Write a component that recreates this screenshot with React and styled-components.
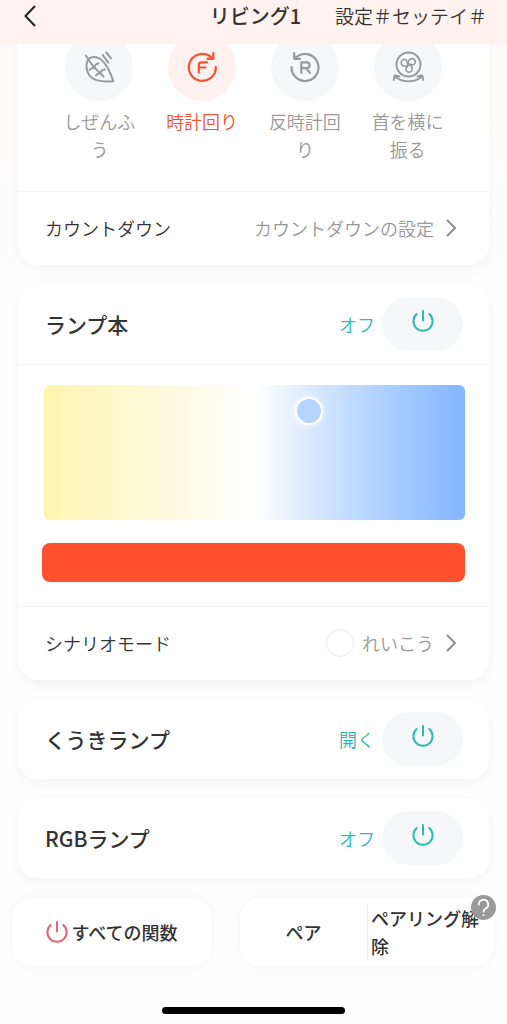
import React, { useState } from "react";
import styled, { createGlobalStyle } from "styled-components";

const GlobalStyle = createGlobalStyle`
  * {
    box-sizing: border-box;
  }
  body {
    margin: 0;
    background: linear-gradient(#fffafa, #fdfdfd 280px);
    font-family: "Noto Sans CJK JP", "Noto Sans", sans-serif;
    font-size: 18px;
    font-weight: 350;
    color: #333333;
  }
  h1, h2 {
    margin: 0;
    font-weight: 500;
  }
`;

const PlainButton = styled.button`
  font: inherit;
  color: inherit;
  background: none;
  border: none;
  padding: 0;
  cursor: pointer;
`;

const Header = styled.header`
  position: sticky;
  top: 0;
  z-index: 2;
  height: 44px;
  padding: 0 20px 12px 24px;
  display: grid;
  grid-template-columns: 1fr auto 1fr;
  align-items: center;
  background: #fff2ef;
`;

const BackButton = styled(PlainButton)`
  justify-self: start;
  display: flex;
`;

const Title = styled.h1`
  font-size: 20px;
  line-height: 32px;
`;

const SettingsButton = styled(PlainButton)`
  justify-self: end;
  font-size: 19px;
  line-height: 32px;
  white-space: nowrap;
`;

const Main = styled.main`
  display: flex;
  flex-direction: column;
  gap: 20px;
  margin-top: -24px;
  padding: 0 18px;
`;

const Card = styled.section`
  background: #ffffff;
  border-radius: 20px;
  box-shadow: 0 4px 10px rgba(0, 0, 0, 0.04);
`;

const Modes = styled.div`
  display: grid;
  grid-template-columns: repeat(4, 1fr);
  padding: 13px 30px 28px;
`;

const ModeButton = styled(PlainButton)`
  display: flex;
  flex-direction: column;
  align-items: center;
  gap: 6px;
  line-height: 28px;
  color: ${(props) => (props.$active ? "#f4532f" : "#999999")};
`;

const ModeIcon = styled.span`
  width: 68px;
  height: 68px;
  border-radius: 50%;
  display: flex;
  align-items: center;
  justify-content: center;
  background: ${(props) => (props.$active ? "#fff1ef" : "#f5f7f9")};
`;

const ModeLabel = styled.span`
  width: 72px;
`;

const Row = styled.div`
  display: flex;
  align-items: center;
  justify-content: space-between;
  min-height: ${(props) => (props.$tall ? "79px" : "74px")};
  padding: 0 26px 2px 27px;
  border-top: ${(props) => (props.$divided ? "1px solid #f5f5f5" : "none")};
`;

const CardTitle = styled.h2`
  font-size: 21px;
`;

const Switch = styled.div`
  display: flex;
  align-items: center;
  gap: 7px;
  color: #2cbcae;
`;

const PowerButton = styled(PlainButton)`
  width: 81px;
  height: 54px;
  padding-bottom: 6px;
  border-radius: 27px;
  display: flex;
  align-items: center;
  justify-content: center;
  background: #f5f7f9;
`;

const LinkButton = styled(PlainButton)`
  display: flex;
  align-items: center;
  gap: 11px;
  padding-right: 6px;
  color: #999999;
`;

const Scene = styled.span`
  display: flex;
  align-items: center;
  gap: 8px;
`;

const Swatch = styled.span`
  width: 28px;
  height: 28px;
  border: 1px solid #eaeaea;
  border-radius: 50%;
`;

const LampControls = styled.div`
  display: flex;
  flex-direction: column;
  gap: 23px;
  padding: 20px 24px 24px;
  border-top: 1px solid #f5f5f5;
`;

const ColorPad = styled.div`
  position: relative;
  height: 135px;
  margin-left: 2px;
  border-radius: 6px;
  background: linear-gradient(
    to right,
    #fef5b0,
    #fffdf6 44%,
    #ffffff 50%,
    #d8e8ff 64%,
    #a9ceff 82%,
    #83b6ff
  );
`;

const PadThumb = styled(PlainButton)`
  position: absolute;
  top: 19%;
  left: 63%;
  width: 28px;
  height: 28px;
  transform: translate(-50%, -50%);
  border: 2px solid #ffffff;
  border-radius: 50%;
  background: #b4d3fd;
  box-shadow: 0 0 6px rgba(255, 255, 255, 0.9);
`;

const Brightness = styled.input`
  appearance: none;
  width: 100%;
  height: 39px;
  margin: 0;
  border-radius: 8px;
  background: #ff502d;
  &::-webkit-slider-thumb {
    appearance: none;
    width: 8px;
    height: 39px;
  }
`;

const Footer = styled.footer`
  display: grid;
  grid-template-columns: 200fr 254fr;
  gap: 28px;
  padding: 20px 13px 0 12px;
`;

const FooterBox = styled.div`
  position: relative;
  display: grid;
  grid-auto-flow: column;
  grid-auto-columns: 1fr;
  align-items: center;
  min-height: 68px;
  border-radius: 20px;
  background: #ffffff;
  box-shadow: 0 0 6px rgba(0, 0, 0, 0.04);
  font-weight: 500;
  line-height: 28px;
`;

const FooterButton = styled(PlainButton)`
  display: flex;
  align-items: center;
  justify-content: center;
  gap: 3px;
`;

const UnpairButton = styled(PlainButton)`
  padding: 0 12px 0 3px;
  border-left: 1px solid #eeeeee;
  text-align: left;
`;

const HelpButton = styled(PlainButton)`
  position: absolute;
  top: -3px;
  right: -2px;
  width: 25px;
  height: 25px;
  border-radius: 50%;
  display: flex;
  align-items: center;
  justify-content: center;
  background: #999999;
`;

const HomeBar = styled.div`
  width: 36%;
  height: 7px;
  margin: 41px auto 10px;
  border-radius: 4px;
  background: #000000;
`;

const PowerIcon = ({ color = "#2cbcae" }) => (
  <svg width="22" height="22" viewBox="0 0 22 22" fill="none" stroke={color} strokeWidth="2" strokeLinecap="round">
    <path d="M4.700 4a9.600 9.600 0 1 0 12.600 0M11 1v9.500" />
  </svg>
);

const Chevron = () => (
  <svg width="12" height="18" viewBox="0 0 12 18" fill="none" stroke="#8f8f8f" strokeWidth="2">
    <path d="M2 1l8 8-8 8" />
  </svg>
);

const LeafIcon = () => (
  <svg width="34" height="34" viewBox="0 0 34 34" fill="none" stroke="#999999" strokeWidth="2" strokeLinecap="round" strokeLinejoin="round">
    <path d="M3.700 5.500L6.300 9C9 6.500 14 6 18 8.800C24.500 13.500 28.500 22.500 31.300 31.300C24 31.800 16.500 31.300 11.500 28.800C5 25.500 2.500 16 6.300 9" />
    <path d="M6.300 9C8 14 13.500 19 21.500 26.500" />
    <path d="M16.500 13.300C13.500 14 12.500 15.500 12 18C10.500 17.800 8.500 18.500 7.500 20M23 19.500C20 19.800 18.700 21 18.200 23.600C16.700 23.300 15 24 14 25.300" />
    <path d="M20.700 5l5.600 7.700M24.300 2.500l4.700 5.800" />
  </svg>
);

const ForwardIcon = () => (
  <svg width="32" height="32" viewBox="0 0 32 32" fill="none" stroke="#f4532f" strokeWidth="2.200" strokeLinecap="round" strokeLinejoin="round">
    <path d="M29.800 16A13.500 13.500 0 1 1 25.500 6.500M27.300 2v5.800H21.500" />
    <path d="M12.800 21.500v-7.500q0-2.600 2.600-2.600H21M13 16.500h6.500" />
  </svg>
);

const ReverseIcon = () => (
  <svg width="32" height="32" viewBox="0 0 32 32" fill="none" stroke="#999999" strokeWidth="2.200" strokeLinecap="round" strokeLinejoin="round">
    <path d="M2.500 16A13.500 13.500 0 1 0 6.500 6.900M5.200 2v5.800H11" />
    <path d="M12.300 21.800V11.300h5.400a2.900 2.900 0 0 1 0 5.800h-5.400M17.500 17.300l3.400 4.500" />
  </svg>
);

const blade = "M16.500 13.500C13 12.800 11.700 9.300 13.500 7C15.300 4.900 19.200 5.800 19.300 8.700C19.300 10.800 16.800 11.200 16.500 13.500Z";

const SwingIcon = () => (
  <svg width="32" height="32" viewBox="0 0 32 32" fill="none" stroke="#999999" strokeWidth="1.900" strokeLinecap="round" strokeLinejoin="round">
    <circle cx="16.500" cy="13.500" r="12" />
    <g strokeWidth="1.600">
      {[-60, 60, 180].map((angle) => (
        <path key={angle} d={blade} transform={`rotate(${angle} 16.5 13.5)`} />
      ))}
    </g>
    <path d="M3 25.500c7 6.500 20 6.500 27 0M1.800 29l1-4.700 4.700 1.200M31.200 29l-1-4.700-4.700 1.200" />
  </svg>
);

const modes = [
  { name: "しぜんふう", Icon: LeafIcon },
  { name: "時計回り", Icon: ForwardIcon },
  { name: "反時計回り", Icon: ReverseIcon },
  { name: "首を横に振る", Icon: SwingIcon },
];

const LampHeader = ({ title, status }) => (
  <Row $tall>
    <CardTitle>{title}</CardTitle>
    <Switch>
      <span>{status}</span>
      <PowerButton aria-label={title}>
        <PowerIcon />
      </PowerButton>
    </Switch>
  </Row>
);

const App = () => {
  const [mode, setMode] = useState("時計回り");
  const [brightness, setBrightness] = useState(100);

  return (
    <>
      <GlobalStyle />
      <Header>
        <BackButton aria-label="戻る">
          <svg width="12" height="22" viewBox="0 0 12 22" fill="none" stroke="#222222" strokeWidth="2">
            <path d="M11 1L1.500 11 11 21" />
          </svg>
        </BackButton>
        <Title>リビング1</Title>
        <SettingsButton>設定＃セッテイ＃</SettingsButton>
      </Header>
      <Main>
        <Card>
          <Modes>
            {modes.map(({ name, Icon }) => (
              <ModeButton key={name} $active={mode === name} onClick={() => setMode(name)}>
                <ModeIcon $active={mode === name}>
                  <Icon />
                </ModeIcon>
                <ModeLabel>{name}</ModeLabel>
              </ModeButton>
            ))}
          </Modes>
          <Row $divided>
            <span>カウントダウン</span>
            <LinkButton>
              カウントダウンの設定
              <Chevron />
            </LinkButton>
          </Row>
        </Card>
        <Card>
          <LampHeader title="ランプ本" status="オフ" />
          <LampControls>
            <ColorPad>
              <PadThumb aria-label="色温度" />
            </ColorPad>
            <Brightness
              type="range"
              aria-label="明るさ"
              value={brightness}
              onChange={(e) => setBrightness(Number(e.target.value))}
            />
          </LampControls>
          <Row $divided>
            <span>シナリオモード</span>
            <LinkButton>
              <Scene>
                <Swatch />
                れいこう
              </Scene>
              <Chevron />
            </LinkButton>
          </Row>
        </Card>
        <Card>
          <LampHeader title="くうきランプ" status="開く" />
        </Card>
        <Card>
          <LampHeader title="RGBランプ" status="オフ" />
        </Card>
      </Main>
      <Footer>
        <FooterBox>
          <FooterButton>
            <PowerIcon color="#e9646f" />
            すべての関数
          </FooterButton>
        </FooterBox>
        <FooterBox>
          <FooterButton>ペア</FooterButton>
          <UnpairButton>ペアリング解除</UnpairButton>
          <HelpButton aria-label="ヘルプ">
            <svg width="15" height="19" viewBox="0 0 15 19" fill="none" stroke="#ffffff" strokeWidth="1.800" strokeLinecap="round">
              <path d="M2.800 6.500a4.700 4.700 0 1 1 7 4c-1.700 1-2.300 1.600-2.300 3.200M7.500 17v.2" />
            </svg>
          </HelpButton>
        </FooterBox>
      </Footer>
      <HomeBar />
    </>
  );
};

export default App;
